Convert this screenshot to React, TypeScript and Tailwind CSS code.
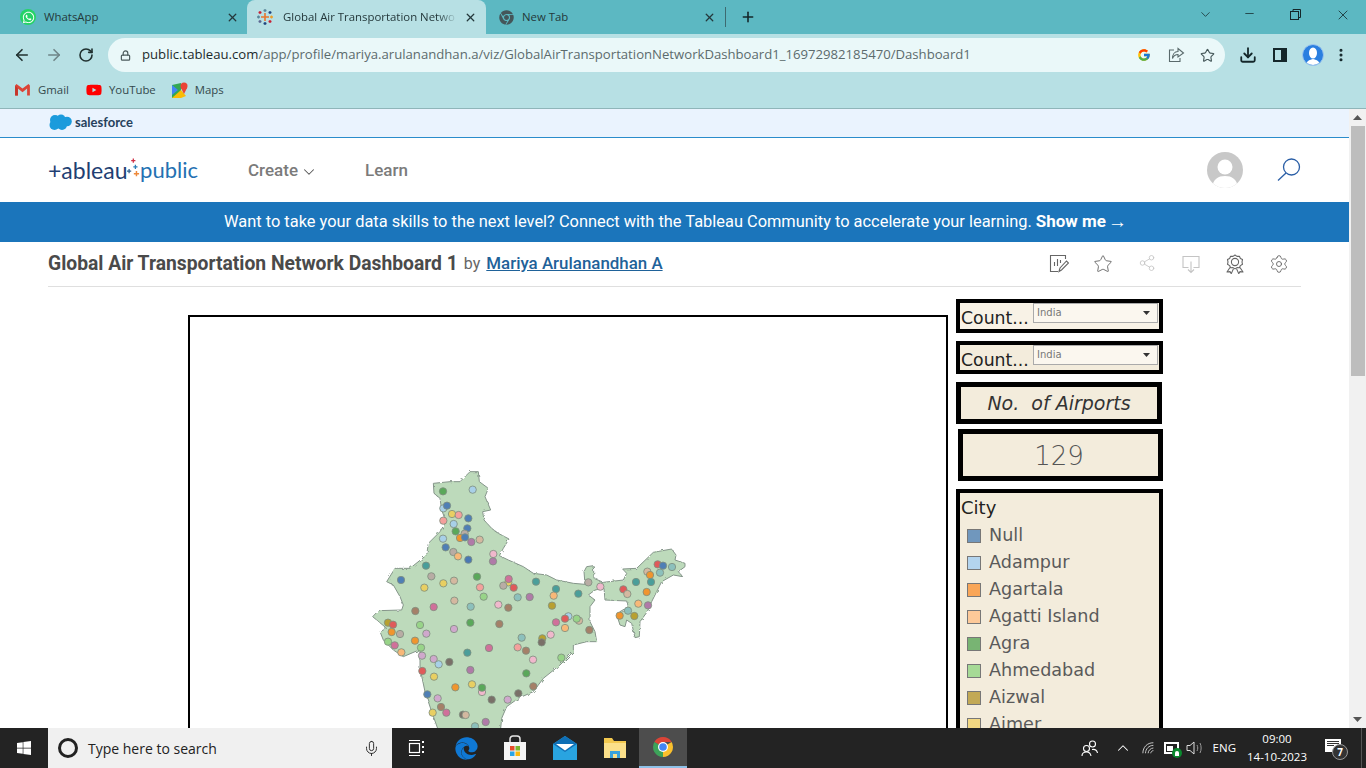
import React from "react";
import { ArrowLeft, ArrowRight, RotateCw, X, Plus, ChevronDown, Minus, Star, Share2, Settings, Lock, Download, ChevronUp, EllipsisVertical, Mic } from "lucide-react";
import { FaWhatsapp, FaChrome, FaYoutube, FaWindows, FaEdge } from "react-icons/fa";
import { FcGoogle } from "react-icons/fc";

const SEGOE = "font-['Open_Sans','Noto_Sans',sans-serif]";
const DEJA = "font-['DejaVu_Sans',sans-serif]";

const TableauMark = () => (
  <svg width="16" height="16" viewBox="0 0 16 16" strokeWidth="1.3">
    <path d="M8 4v8M4 8h8" stroke="#e8762d" strokeWidth="1.6" />
    <path d="M8 0v3M6.5 1.5h3" stroke="#5b879b" />
    <path d="M8 13v3M6.5 14.5h3" stroke="#1f457e" />
    <path d="M0 8h3M1.5 6.5v3" stroke="#59879b" />
    <path d="M13 8h3M14.5 6.5v3" stroke="#eb9e2c" />
    <path d="M3 2v3M1.5 3.5h3" stroke="#c72035" />
    <path d="M13 2v3M11.5 3.5h3" stroke="#1f447e" />
    <path d="M3 11v3M1.5 12.5h3" stroke="#5c6692" />
    <path d="M13 11v3M11.5 12.5h3" stroke="#c72035" />
  </svg>
);

const ChromeColor = ({ s = 24 }: { s?: number }) => (
  <svg width={s} height={s} viewBox="0 0 48 48">
    <path d="M24 24 6.7 14A20 20 0 0 1 41.3 14H24z" fill="#db4437" />
    <path d="M24 24 41.3 14A20 20 0 0 1 24 44z" fill="#fbc02d" />
    <path d="M24 24V44A20 20 0 0 1 6.7 14z" fill="#3da35a" />
    <circle cx="24" cy="24" r="10" fill="#fff" />
    <circle cx="24" cy="24" r="7.6" fill="#4285f4" />
  </svg>
);

const Tabs = () => (
  <div className="h-[34px] bg-[#5cb8c2] flex items-end text-[11.4px] text-[#24383b] shrink-0">
    <div className="w-[247px] h-full flex items-center">
      <span className="ml-[20px] w-[16px] h-[16px] rounded-full bg-[#25d366] flex items-center justify-center text-white"><FaWhatsapp size={13} /></span>
      <span className="ml-[8px] flex-1">WhatsApp</span>
      <X size={13} strokeWidth={2.4} className="mr-[8px]" />
    </div>
    <div className="w-[239px] h-full bg-[#b7e0e4] rounded-t-[8px] flex items-center">
      <span className="ml-[10px]"><TableauMark /></span>
      <span className="ml-[10px] w-[176px] whitespace-nowrap [mask-image:linear-gradient(to_right,black_88%,transparent_99%)]">Global Air Transportation Netwo</span>
      <X size={13} strokeWidth={2.4} className="ml-[5px]" />
    </div>
    <div className="w-[239px] h-full flex items-center">
      <span className="ml-[13px] text-[#44565a]"><FaChrome size={15} /></span>
      <span className="ml-[8px] flex-1">New Tab</span>
      <X size={13} strokeWidth={2.4} className="mr-[9px]" />
    </div>
    <div className="w-px h-[20px] bg-[#3d6a70] mb-[7px]" />
    <Plus size={16} strokeWidth={2.4} className="ml-[14px] mb-[9px] text-[#14272a]" />
    <div className="flex-1" />
    <div className="flex h-full items-start pt-[7px] text-[#14272a]">
      <ChevronDown size={15} strokeWidth={1.2} className="mr-[30px]" />
      <Minus size={13} strokeWidth={1.4} className="mr-[33px]" />
      <svg width="13" height="13" viewBox="0 0 13 13" fill="none" stroke="#14272a" className="mr-[33px] mt-px"><rect x="1.5" y="3.5" width="8" height="8" /><path d="M4 3.500V1.500h7.500v8H9.500" /></svg>
      <X size={16} strokeWidth={1.2} className="mr-[15px]" />
    </div>
  </div>
);

const Toolbar = () => (
  <div className="h-[42px] bg-[#b7e0e4] flex items-center shrink-0 text-[#20302f]">
    <ArrowLeft size={18} strokeWidth={2.2} className="ml-[13px]" />
    <ArrowRight size={18} strokeWidth={2.2} className="ml-[14px] text-[#6f8588]" />
    <RotateCw size={16} strokeWidth={2.4} className="ml-[15px]" />
    <div className="ml-[14px] w-[1117px] h-[34px] rounded-full bg-[#eaf8f9] flex items-center">
      <Lock size={11} strokeWidth={2.6} className="ml-[12px] text-[#4c5b5d]" />
      <span className={`ml-[11px] flex-1 text-[13.15px] text-[#5c6b6d] whitespace-nowrap ${SEGOE}`}><span className="text-[#1c2a2c]">public.tableau.com</span>/app/profile/mariya.arulanandhan.a/viz/GlobalAirTransportationNetworkDashboard1_16972982185470/Dashboard1</span>
      <FcGoogle size={14} className="mr-[17px]" />
      <svg width="17" height="16" viewBox="0 0 17 16" fill="none" stroke="#5a6a6c" strokeWidth="1.1" className="mr-[15px]"><path d="M6 3H1.500v11.500H12V11" /><path d="M10 1.500 15.500 6 10 10V7.500C7 7.500 5.500 9 4.500 11.500 4.500 7.500 6.500 4.500 10 4.500z" /></svg>
      <Star size={15} strokeWidth={1.8} className="mr-[10px] text-[#46585a]" />
    </div>
    <Download size={18} strokeWidth={2.4} className="ml-[14px] text-[#14272a]" />
    <svg width="14" height="14" viewBox="0 0 14 14" className="ml-[16px]"><path fill="#14272a" d="M0 0h14v14H0z" /><path fill="#b7e0e4" d="M2 2h6v10H2z" /></svg>
    <span className="ml-[15px] w-[22px] h-[22px] rounded-full bg-[#2a7fe0] overflow-hidden flex items-center justify-center border border-[#9cc6ee]">
      <svg width="20" height="20" viewBox="0 0 20 20"><ellipse cx="10" cy="8" rx="4" ry="5.500" fill="#fff" /><path d="M3 20c1-5 4-5 7-6 3 1 6 1 7 6z" fill="#fff" /></svg>
    </span>
    <EllipsisVertical size={16} strokeWidth={2.6} className="ml-[9px] text-[#14272a]" />
  </div>
);

const Bookmarks = () => (
  <div className={`h-[33px] pb-[5px] bg-[#b7e0e4] border-b border-[#8fb5b9] flex items-center text-[11.4px] text-[#34494c] shrink-0 ${SEGOE}`}>
    <svg width="15" height="12" viewBox="0 0 16 13" className="ml-[15px]"><path d="M0 1.500v11h3V5l5 4 5-4v7.500h3v-11L14.500 0 8 5 1.500 0z" fill="#db4437" /><path d="M3 5v7.500H0v-11z" fill="#c5352a" /></svg>
    <span className="ml-[8px]">Gmail</span>
    <FaYoutube size={16} className="ml-[17px] text-[#f00]" />
    <span className="ml-[7px]">YouTube</span>
    <svg width="16" height="16" viewBox="0 0 16 16" className="ml-[16px]"><path d="M0 3 9 1v13l-9 2z" fill="#34a853" /><path d="M0 16 9 8l5 6-5 2z" fill="#fbbc04" /><path d="M0 3l6 5-6 5z" fill="#4285f4" /><circle cx="12" cy="4" r="3.500" fill="#ea4335" /><path d="M9 6l3 6 3-6z" fill="#ea4335" /></svg>
    <span className="ml-[7px]">Maps</span>
  </div>
);

const AwardIcon = () => (
  <svg width="20" height="20" viewBox="0 0 20 20" fill="none" stroke="#666" strokeWidth="1.100" strokeLinejoin="round">
    <path d="M10 1l2 1.400 2.400-.2 1 2.200 2.100 1.200-.5 2.400.5 2.300-2.100 1.300-1 2.200-2.400-.2L10 14.900l-2-1.300-2.400.2-1-2.200-2.100-1.300.5-2.300-.5-2.400 2.100-1.200 1-2.200L8 2.400z" />
    <circle cx="10" cy="8" r="3.600" />
    <path d="M5 13.500 2 18l3-.4 1.300 2 2.200-5M15 13.500l3 4.500-3-.4-1.300 2-2.200-5" />
  </svg>
);

const PageHeader = () => (
  <>
    <div className="h-[29px] pb-[2px] bg-[#eaf3fe] border-b border-[#2a8ccb] flex items-center pl-[48px] shrink-0">
      <svg width="24" height="17" viewBox="0 0 24 17"><g fill="#1b9bdc"><circle cx="7" cy="6" r="5" /><circle cx="13" cy="5" r="4.500" /><circle cx="19" cy="7.500" r="4.800" /><circle cx="14" cy="11" r="5" /><circle cx="6.500" cy="11" r="5" /></g></svg>
      <span className="ml-[3px] text-[13px] font-bold text-[#26415c] font-['Lato',sans-serif] leading-none">salesforce</span>
    </div>
    <div className="h-[64px] flex items-center pl-[48px] shrink-0">
      <div className="w-[150px] flex items-center font-['Lato',sans-serif] text-[23px] leading-none">
        <span className="text-[#1f3f73]">+ableau</span>
        <svg width="15" height="24" viewBox="0 0 12 22"><path d="M6 0v4M4 2h4" stroke="#d03045" strokeWidth="1.200" /><path d="M2 10v4M0 12h4" stroke="#2f5d8c" strokeWidth="1.200" /><path d="M8 6v4M6 8h4" stroke="#2a7fb8" strokeWidth="1.200" /><path d="M9 12v5M6.500 14.500h5" stroke="#ee8a3c" strokeWidth="1.400" /></svg>
        <span className="text-[#2471b2] text-[22px]">public</span>
      </div>
      <span className="ml-[50px] mt-px text-[17px] font-medium text-[#7b7b7b] font-['Roboto',sans-serif]">Create</span>
      <ChevronDown size={18} strokeWidth={1.4} className="ml-[2px] mt-[3px] text-[#555]" />
      <span className="ml-[47px] mt-px text-[17px] font-medium text-[#7b7b7b] font-['Roboto',sans-serif]">Learn</span>
      <div className="flex-1" />
      <span className="w-[36px] h-[36px] rounded-full bg-[#c8c8c8] overflow-hidden flex items-center justify-center">
        <svg width="36" height="36" viewBox="0 0 36 36"><circle cx="18" cy="15" r="7.500" fill="#fff" /><path d="M5 36c1-9 6-12 13-12s12 3 13 12z" fill="#fff" /></svg>
      </span>
      <svg width="26" height="26" viewBox="0 0 26 26" fill="none" stroke="#2a5ea6" strokeWidth="1.300" className="ml-[33px] mr-[47px]"><circle cx="15.500" cy="10" r="8" /><path d="M10 16 2 23.500" /></svg>
    </div>
    <div className="h-[40px] pl-[2px] bg-[#1b75bb] flex items-center justify-center text-white text-[16.4px] font-['Roboto',sans-serif] shrink-0 whitespace-nowrap">
      <span>Want to take your data skills to the next level? Connect with the Tableau Community to accelerate your learning.</span>
      <span className="ml-[4px] font-bold text-[17px]">Show me</span>
      <span className="ml-[2px] text-[19px] font-['Liberation_Sans',sans-serif]">→</span>
    </div>
    <div className="mx-[48px] h-[45px] border-b border-[#dfdfdf] flex items-center font-['Roboto',sans-serif] shrink-0">
      <span className="text-[19.3px] font-bold text-[#4a4a4a] whitespace-nowrap">Global Air Transportation Network Dashboard 1</span>
      <span className="ml-[6px] text-[16px] text-[#666] mb-[1px]">by</span>
      <span className="ml-[6px] text-[16.9px] font-medium text-[#1f6299] underline mb-[1px]">Mariya Arulanandhan A</span>
      <div className="flex-1" />
      <div className="flex text-[#666]">
        <span className="w-[44px] flex justify-center">
          <svg width="20" height="20" viewBox="0 0 20 20" fill="none" stroke="#666" strokeWidth="1.100"><path d="M9 17.500H1.500v-16h15V5" /><path d="M5.500 12V8M8.500 12V5M11.500 9V6" /><path d="M10 17.500l1-3.500 6.500-7 2 2-7 7z" /></svg>
        </span>
        <span className="w-[44px] flex justify-center"><Star size={20} strokeWidth={1.1} /></span>
        <span className="w-[44px] flex justify-center text-[#c4c4c4]"><Share2 size={18} strokeWidth={1.1} /></span>
        <span className="w-[44px] flex justify-center">
          <svg width="20" height="20" viewBox="0 0 20 20" fill="none" stroke="#c4c4c4" strokeWidth="1.100"><path d="M7.500 13.500H2v-11h16v11h-5.500" /><path d="M10 7.500v11M7 15.500l3 3 3-3" /></svg>
        </span>
        <span className="w-[44px] flex justify-center"><AwardIcon /></span>
        <span className="w-[44px] flex justify-center"><Settings size={20} strokeWidth={1.1} /></span>
      </div>
    </div>
  </>
);

const DOTS: [number, number, string][] = [
  [249,79,"#5aa85a"],[338,74,"#a8d0e8"],[250,130,"#a8d0e8"],[261,122,"#4f7fb5"],[276,147,"#e8cf62"],[296,150,"#f4a09c"],[325,160,"#4f7fb5"],[250,167,"#f4a09c"],[281,177,"#a8d0e8"],[322,190,"#4f7fb5"],[287,199,"#5aa85a"],[314,206,"#b8aca4"],[300,219,"#f0952e"],[315,217,"#4f7fb5"],[249,221,"#a8d0e8"],[334,231,"#b07aa8"],[359,224,"#d4b8a0"],[257,247,"#4f7fb5"],[280,261,"#b8aca4"],[294,274,"#f8b878"],[325,284,"#4a78b4"],[400,267,"#f0b8cc"],[399,289,"#b07aa8"],
  [198,302,"#4a9e9a"],[123,345,"#4f7fb5"],[214,334,"#b8aca4"],[351,335,"#5aa85a"],[282,347,"#d4b8a0"],[250,355,"#e8cf62"],[193,368,"#e8cf62"],[360,367,"#f4a09c"],[445,352,"#e8cf62"],[446,342,"#d0709a"],[430,362,"#b8aca4"],[461,368,"#e05a5a"],[528,350,"#4a9e9a"],[588,372,"#4a9e9a"],[581,392,"#f8b878"],[655,386,"#4a9e9a"],[685,352,"#b8aca4"],[721,365,"#f0b8cc"],
  [371,395,"#98d488"],[473,397,"#8cc0bc"],[509,396,"#b07aa8"],[283,407,"#d4b8a0"],[415,419,"#f0b8cc"],[332,425,"#8cc0bc"],[221,426,"#d0709a"],[445,428,"#a58068"],[576,422,"#b8a030"],[166,438,"#a58068"],
  [625,454,"#a8d0e8"],[615,461,"#e05a5a"],[588,472,"#d0709a"],[657,467,"#d4b8a0"],[650,461,"#98d488"],[615,489,"#f8b878"],[688,495,"#a58068"],[572,509,"#f0b8cc"],
  [84,473,"#b8a030"],[99,479,"#e05a5a"],[95,501,"#f0952e"],[120,507,"#b8aca4"],[180,480,"#98d488"],[199,506,"#cfa8cc"],[331,473,"#5aa85a"],[418,477,"#a58068"],[282,492,"#cfa8cc"],[485,518,"#8cc0bc"],[547,520,"#b8a030"],[545,532,"#7a7068"],[84,530,"#98d488"],[104,541,"#d0709a"],[165,527,"#f0952e"],[183,548,"#98d488"],[124,562,"#f8b878"],
  [473,547,"#f4a09c"],[498,557,"#a58068"],[387,549,"#d0709a"],[322,563,"#4a9e9a"],[186,572,"#cfa8cc"],[221,582,"#cfa8cc"],[236,598,"#a8d0e8"],[268,591,"#7a7068"],[519,584,"#f0b8cc"],[604,578,"#98d488"],[187,618,"#e05a5a"],[331,615,"#b07aa8"],[499,625,"#5aa85a"],[222,635,"#e8cf62"],[336,658,"#e8cf62"],[286,667,"#f0952e"],[366,681,"#f0b8cc"],[366,668,"#5aa85a"],[520,664,"#a58068"],[475,685,"#7a7068"],[202,688,"#4f7fb5"],[233,700,"#cfa8cc"],[395,704,"#7a7068"],[443,704,"#cfa8cc"],[243,726,"#a58068"],[218,743,"#e8cf62"],[259,743,"#d0709a"],[309,749,"#7a7068"],[317,750,"#d4b8a0"],[377,771,"#b07aa8"],[345,784,"#8cc0bc"],
  [893,298,"#e05a5a"],[909,302,"#4f7fb5"],[936,306,"#8cc0bc"],[862,320,"#d4b8a0"],[870,330,"#f0952e"],[900,323,"#8cc0bc"],[828,351,"#4a9e9a"],[873,351,"#4a9e9a"],[790,373,"#e05a5a"],[802,387,"#d4b8a0"],[860,381,"#f0952e"],[835,416,"#f8b878"],[864,421,"#b07aa8"],[804,437,"#8cc0bc"],[779,452,"#f0952e"],[823,453,"#b8a030"],
];

const INDIA = "330,20 355,20 358,50 385,70 375,95 392,135 368,140 372,165 395,190 415,205 447,222 430,250 418,272 445,285 490,305 520,325 560,330 590,345 640,355 675,358 672,320 680,305 700,302 702,340 730,352 790,345 800,325 788,312 830,310 880,262 935,252 948,270 945,285 975,295 975,305 955,320 968,335 940,330 905,350 890,380 875,410 862,440 840,470 838,515 825,518 815,475 800,465 795,485 780,480 772,455 780,440 805,425 800,408 735,405 732,370 705,375 685,390 705,405 690,425 690,470 705,500 710,530 680,530 640,540 640,560 600,600 550,640 520,680 475,700 440,725 425,760 420,810 240,810 215,740 195,680 180,610 180,555 165,560 130,575 100,555 70,525 60,500 80,490 50,465 38,455 55,437 125,435 130,420 120,395 100,360 80,350 105,310 150,310 200,270 205,235 240,200 258,170 245,135 240,100 222,85 220,55 270,50 300,50";

const MapPanel = () => (
  <div className="w-[760px] h-[600px] mt-[28px] border-2 border-black bg-white overflow-hidden shrink-0">
    <svg width="340" height="270" viewBox="0 0 1020 810" className="ml-[170px] mt-[148px] block">
      <defs>
        <filter id="coast" x="-5%" y="-5%" width="110%" height="110%">
          <feTurbulence type="fractalNoise" baseFrequency="0.09" numOctaves="2" seed="4" />
          <feDisplacementMap in="SourceGraphic" scale="9" />
        </filter>
      </defs>
      <polygon points={INDIA} fill="#bddabb" stroke="#85958a" strokeWidth="3" strokeLinejoin="round" filter="url(#coast)" />
      {DOTS.map(([x, y, c], i) => (
        <circle key={i} cx={x} cy={y} r="11" fill={c} stroke="#7f8f80" strokeWidth="2.500" />
      ))}
    </svg>
  </div>
);

const CITIES: [string, string][] = [
  ["Null", "#7097bd"], ["Adampur", "#b3d4ee"], ["Agartala", "#f9a658"], ["Agatti Island", "#fdc999"],
  ["Agra", "#78b473"], ["Ahmedabad", "#a6da96"], ["Aizwal", "#c2a955"], ["Ajmer", "#f3d882"],
];

const Filter = ({ h, bg, mt }: { h: string; bg: string; mt: string }) => (
  <div className={`w-[207px] border-4 border-black flex ${h} ${bg} ${mt} shrink-0 overflow-hidden`}>
    <span className={`${DEJA} ml-px mt-[3px] text-[17.3px] leading-[24px] text-[#222] w-[72px] whitespace-nowrap`}>Count...</span>
    <div className="w-[125px] h-[20px] border border-[#aaa] bg-[#fbf7ef] flex items-center">
      <span className={`${DEJA} ml-[3px] flex-1 text-[10px] leading-[14px] mb-px text-[#777]`}>India</span>
      <svg width="7" height="4" viewBox="0 0 7 4" className="mr-[7px]"><path d="M0 0h7L3.500 4z" fill="#333" /></svg>
    </div>
  </div>
);

const SidePanel = () => (
  <div className="w-[207px] ml-[8px] mt-[12px] flex flex-col shrink-0">
    <Filter h="h-[34px]" bg="bg-[#f8f2e6]" mt="" />
    <Filter h="h-[33px]" bg="bg-[#f3ecdc]" mt="mt-[8px]" />
    <div className={`w-[206px] h-[42px] mt-[8px] border-[5px] border-black bg-[#f3ecdc] flex items-center justify-center ${DEJA} italic text-[19px] text-[#333] shrink-0 whitespace-nowrap`}>No.&nbsp; of Airports</div>
    <div className={`w-[205px] h-[52px] ml-[2px] mt-[5px] pr-[3px] pt-[2px] border-[5px] border-black bg-[#f3ecdc] flex items-center justify-center ${DEJA} font-extralight text-[26px] text-[#555] shrink-0`}>129</div>
    <div className={`w-[207px] h-[400px] mt-[8px] border-4 border-black bg-[#f3ecdc] ${DEJA} shrink-0 overflow-hidden`}>
      <div className="ml-px mt-[3px] h-[26px] text-[18px] leading-[24px] font-medium text-[#222]">City</div>
      {CITIES.map(([n, c]) => (
        <div key={n} className="h-[27px] flex items-center pl-[7px]">
          <span className="w-[14px] h-[14px] border border-[#777]" style={{ backgroundColor: c }} />
          <span className="ml-[8px] text-[17.6px] text-[#5a5a5a] whitespace-nowrap">{n}</span>
        </div>
      ))}
    </div>
  </div>
);

const Scrollbar = () => (
  <div className="w-[17px] bg-[#f1f1f1] flex flex-col items-center shrink-0 h-full">
    <div className="h-[17px] flex items-center"><svg width="9" height="5" viewBox="0 0 9 5"><path d="M0 5h9L4.500 0z" fill="#555" /></svg></div>
    <div className="w-[14px] h-[250px] bg-[#bdbdbd]" />
    <div className="flex-1" />
    <div className="h-[17px] flex items-center"><svg width="9" height="5" viewBox="0 0 9 5"><path d="M0 0h9L4.500 5z" fill="#555" /></svg></div>
  </div>
);

const Taskbar = () => (
  <div className={`h-[40px] bg-[#232323] flex items-center text-white shrink-0 ${SEGOE}`}>
    <span className="w-[48px] flex justify-center"><FaWindows size={16} /></span>
    <div className="w-[344px] h-full bg-[#f0f0f0] flex items-center text-[#222]">
      <span className="ml-[10px] w-[20px] h-[20px] rounded-full border-[3px] border-[#222]" />
      <span className="ml-[10px] flex-1 text-[14px]">Type here to search</span>
      <Mic size={17} strokeWidth={1.3} className="mr-[12px]" />
    </div>
    <span className="w-[49px] flex justify-center">
      <svg width="18" height="18" viewBox="0 0 18 18" fill="none" stroke="#fff" strokeWidth="1.200"><path d="M1 1.500h11M1 16.500h11" /><rect x="1.500" y="4.500" width="10" height="9" /><path d="M15 2v2M15 7v2M15 12v2" strokeWidth="2" /></svg>
    </span>
    <span className="w-[51px] flex justify-center text-[#0f78d4]"><FaEdge size={23} /></span>
    <span className="w-[46px] flex justify-center">
      <svg width="24" height="26" viewBox="0 0 24 26"><path d="M7 7V4a3 3 0 0 1 3-3h4a3 3 0 0 1 3 3v3" fill="none" stroke="#e6e6e6" strokeWidth="1.500" /><path d="M1 7h22v18H1z" fill="#f4f4f4" /><path d="M7 11h4.500v4.500H7z" fill="#e74c2a" /><path d="M12.500 11H17v4.500h-4.500z" fill="#7cb82f" /><path d="M7 16.500h4.500V21H7z" fill="#2aa5e8" /><path d="M12.500 16.500H17V21h-4.500z" fill="#fbb80f" /></svg>
    </span>
    <span className="w-[53px] flex justify-center">
      <svg width="24" height="24" viewBox="0 0 24 24"><path d="M0 8 12 0l12 8v16H0z" fill="#29a4e0" /><path d="M0 8l12 8 12-8L12 0z" fill="#0f6fb5" /><path d="M3 8h18l-9 6.500z" fill="#fff" /></svg>
    </span>
    <span className="w-[48px] flex justify-center">
      <svg width="24" height="22" viewBox="0 0 24 22"><path d="M1 1h8l2 3h12v17H1z" fill="#f3c94f" /><path d="M1 6h22v15H1z" fill="#fbe08a" /><path d="M7 14h10v7H7z" fill="#3aa2dc" /><path d="M10 17h4v4h-4z" fill="#fbe08a" /></svg>
    </span>
    <span className="w-[48px] h-full bg-[#4d4d4d] flex items-center justify-center border-b-2 border-[#8ec1e8]"><ChromeColor /></span>
    <div className="flex-1" />
    <svg width="17" height="17" viewBox="0 0 17 17" fill="none" stroke="#fff" strokeWidth="1.100" className="mr-[16px]"><circle cx="5.500" cy="8.500" r="3" /><path d="M1 16c0-3 2-4 4.500-4s4 1 4.500 4" /><circle cx="11.500" cy="4" r="3" /><path d="M11 9.500c3-.5 5 1 5.500 3.500" /></svg>
    <ChevronUp size={18} strokeWidth={1.4} className="mr-[10px]" />
    <svg width="14" height="14" viewBox="0 0 16 14" fill="none" stroke="#ccc" strokeWidth="1.100" className="mr-[8px]"><path d="M1 13C1 6 6 1 13 1M4 13c0-5 4-9 9-9M7 13c0-3 3-6 6-6M10 13c0-1.500 1.500-3 3-3" /></svg>
    <span className="relative mr-[6px] w-[15px] h-[12px] border-2 border-white flex items-center">
      <span className="block w-[6px] h-[5px] ml-px bg-white" />
      <span className="absolute -right-[5px] -bottom-[6px] w-[10px] h-[10px] rounded-full bg-[#0a8a2e] flex items-center justify-center"><span className="block w-[4px] h-[5px] bg-white rounded-t-full" /></span>
    </span>
    <svg width="18" height="16" viewBox="0 0 18 16" fill="none" stroke="#ddd" strokeWidth="1" className="ml-px mr-[9px]"><path d="M1 5.500h3L8 2v12l-4-3.500H1z" /><path d="M11 5c1 2 1 4 0 6M14 3c1.500 3 1.500 7 0 10" stroke="#999" /></svg>
    <span className="text-[11.5px] mr-[10px] whitespace-nowrap">ENG</span>
    <div className="flex flex-col items-center text-[11.5px] leading-[18px] w-[62px] whitespace-nowrap">
      <span>09:00</span>
      <span>14-10-2023</span>
    </div>
    <span className="relative ml-[17px] mr-[20px] w-[16px] h-[13px] bg-white mb-[6px] flex flex-col gap-px pt-[2px] pl-[2px] pr-[2px]">
      <span className="block h-px bg-[#333]" />
      <span className="block h-px bg-[#333]" />
      <span className="block h-px w-[7px] bg-[#333]" />
      <span className="absolute left-[7px] top-[5px] w-[16px] h-[16px] rounded-full border border-[#999] bg-[#333] text-[10px] font-bold leading-[14px] text-center text-white">7</span>
    </span>
    <span className="block w-px h-full bg-[#555] mr-[4px]" />
  </div>
);

export default function App() {
  return (
    <div className="w-[1366px] h-[768px] flex flex-col overflow-hidden bg-white">
      <div className={SEGOE}>
        <Tabs />
        <Toolbar />
        <Bookmarks />
      </div>
      <div className="flex-1 min-h-0 flex">
        <div className="w-[1349px] overflow-hidden flex flex-col">
          <PageHeader />
          <div className="flex pl-[188px]">
            <MapPanel />
            <SidePanel />
          </div>
        </div>
        <Scrollbar />
      </div>
      <Taskbar />
    </div>
  );
}
